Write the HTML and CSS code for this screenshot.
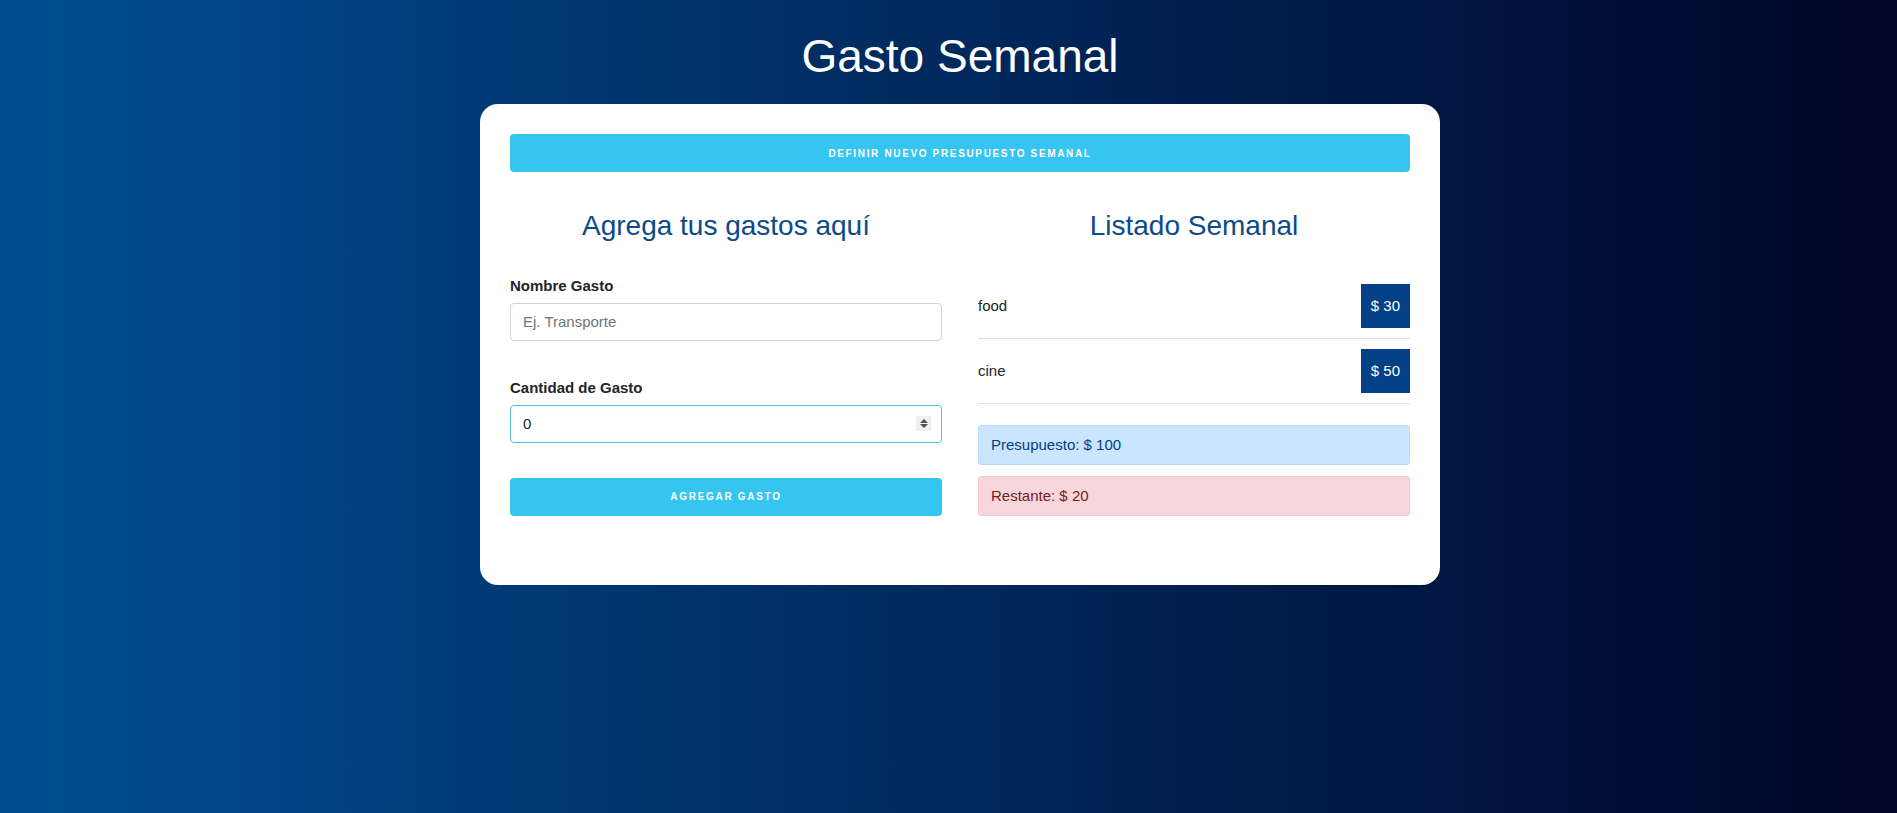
FILE: index.html
```html
<!DOCTYPE html>
<html lang="es">
<head>
<meta charset="utf-8">
<title>Gasto Semanal</title>
<link rel="stylesheet" href="styles.css">
</head>
<body>
<div class="page">
  <h1 class="title">Gasto Semanal</h1>
  <main class="card">
    <button class="btn btn-top" type="button">Definir nuevo presupuesto semanal</button>
    <div class="cols">
      <section class="col">
        <h2 class="heading">Agrega tus gastos aquí</h2>
        <form class="form">
          <div class="field">
            <label class="label">Nombre Gasto</label>
            <input class="control" type="text" placeholder="Ej. Transporte">
          </div>
          <div class="field">
            <label class="label">Cantidad de Gasto</label>
            <div class="control control-num focused">
              <input class="num-input" type="text" value="0">
              <span class="spin"><span class="spin-up"></span><span class="spin-down"></span></span>
            </div>
          </div>
          <button class="btn btn-add" type="button">Agregar gasto</button>
        </form>
      </section>
      <section class="col">
        <h2 class="heading heading-list">Listado Semanal</h2>
        <ul class="list">
          <li class="item"><span class="item-name">food</span><span class="badge">$ 30</span></li>
          <li class="item"><span class="item-name">cine</span><span class="badge">$ 50</span></li>
        </ul>
        <div class="alert alert-primary">Presupuesto: $ 100</div>
        <div class="alert alert-danger">Restante: $ 20</div>
      </section>
    </div>
  </main>
</div>
</body>
</html>
```
FILE: styles.css
```css
* { box-sizing: border-box; }
html, body { margin: 0; padding: 0; }
body {
  min-height: 100vh;
  background: linear-gradient(to right, #004e92, #000428);
  font-family: "Liberation Sans", Arial, sans-serif;
  color: #212529;
  overflow: hidden;
}
.page {
  padding-top: 29px;
  padding-left: 23px;
  display: flex;
  flex-direction: column;
  align-items: center;
}
.title {
  margin: 0 0 20px;
  font-size: 46px;
  line-height: 1.2;
  font-weight: normal;
  color: #fff;
}
.card {
  width: 960px;
  background: #fff;
  border-radius: 18px;
  padding: 30px 30px 69px;
}
.btn {
  display: block;
  width: 100%;
  height: 38px;
  border: none;
  border-radius: 4px;
  background: #35c5f0;
  color: #fff;
  font-family: "Liberation Sans", Arial, sans-serif;
  font-weight: bold;
  font-size: 10px;
  letter-spacing: 1.65px;
  text-transform: uppercase;
  cursor: pointer;
}
.btn-add { letter-spacing: 1.7px; }
.cols {
  margin-top: 37px;
  display: grid;
  grid-template-columns: 432px 432px;
  column-gap: 36px;
}
.heading {
  margin: 0 0 32px;
  font-size: 28px;
  line-height: 1.2;
  font-weight: normal;
  text-align: center;
  color: #0b4a8b;
}
.heading-list { margin-bottom: 31px; }
.form { display: flex; flex-direction: column; }
.field { display: flex; flex-direction: column; margin-bottom: 36px; }
.field + .field { margin-bottom: 35px; }
.label {
  font-size: 15px;
  line-height: 22px;
  font-weight: bold;
  margin-bottom: 6px;
  color: #212529;
}
.control {
  height: 38px;
  width: 100%;
  border: 1px solid #ced4da;
  border-radius: 4px;
  padding: 0 12px;
  font-family: "Liberation Sans", Arial, sans-serif;
  font-size: 15px;
  color: #495057;
  outline: none;
}
.control::placeholder { color: #6c757d; }
.control-num {
  display: flex;
  align-items: center;
  padding-right: 10px;
}
.focused { border-color: #58bfe3; }
.num-input {
  flex: 1;
  border: none;
  outline: none;
  padding: 0;
  font-family: "Liberation Sans", Arial, sans-serif;
  font-size: 15px;
  color: #212529;
  background: transparent;
}
.spin {
  width: 15px;
  height: 15px;
  background: #efefef;
  display: flex;
  flex-direction: column;
  align-items: center;
  justify-content: center;
  gap: 1px;
}
.spin-up, .spin-down {
  width: 0;
  height: 0;
  border-left: 4px solid transparent;
  border-right: 4px solid transparent;
}
.spin-up { border-bottom: 4px solid #505050; }
.spin-down { border-top: 4px solid #505050; }
.list { list-style: none; margin: 0 0 21px; padding: 0; }
.item {
  display: flex;
  justify-content: space-between;
  align-items: center;
  padding: 10px 0;
  border-bottom: 1px solid #dee2e6;
  font-size: 15px;
}
.badge {
  height: 44px;
  line-height: 44px;
  padding: 0 10px;
  background: #034086;
  color: #fff;
  font-size: 15px;
}
.alert {
  border: 1px solid transparent;
  border-radius: 3px;
  padding: 8px 12px;
  font-size: 15px;
  line-height: 22px;
}
.alert + .alert { margin-top: 11px; }
.alert-primary { background: #cce5ff; border-color: #b8daff; color: #004085; }
.alert-danger { background: #f8d7da; border-color: #f5c6cb; color: #721c24; }
```
